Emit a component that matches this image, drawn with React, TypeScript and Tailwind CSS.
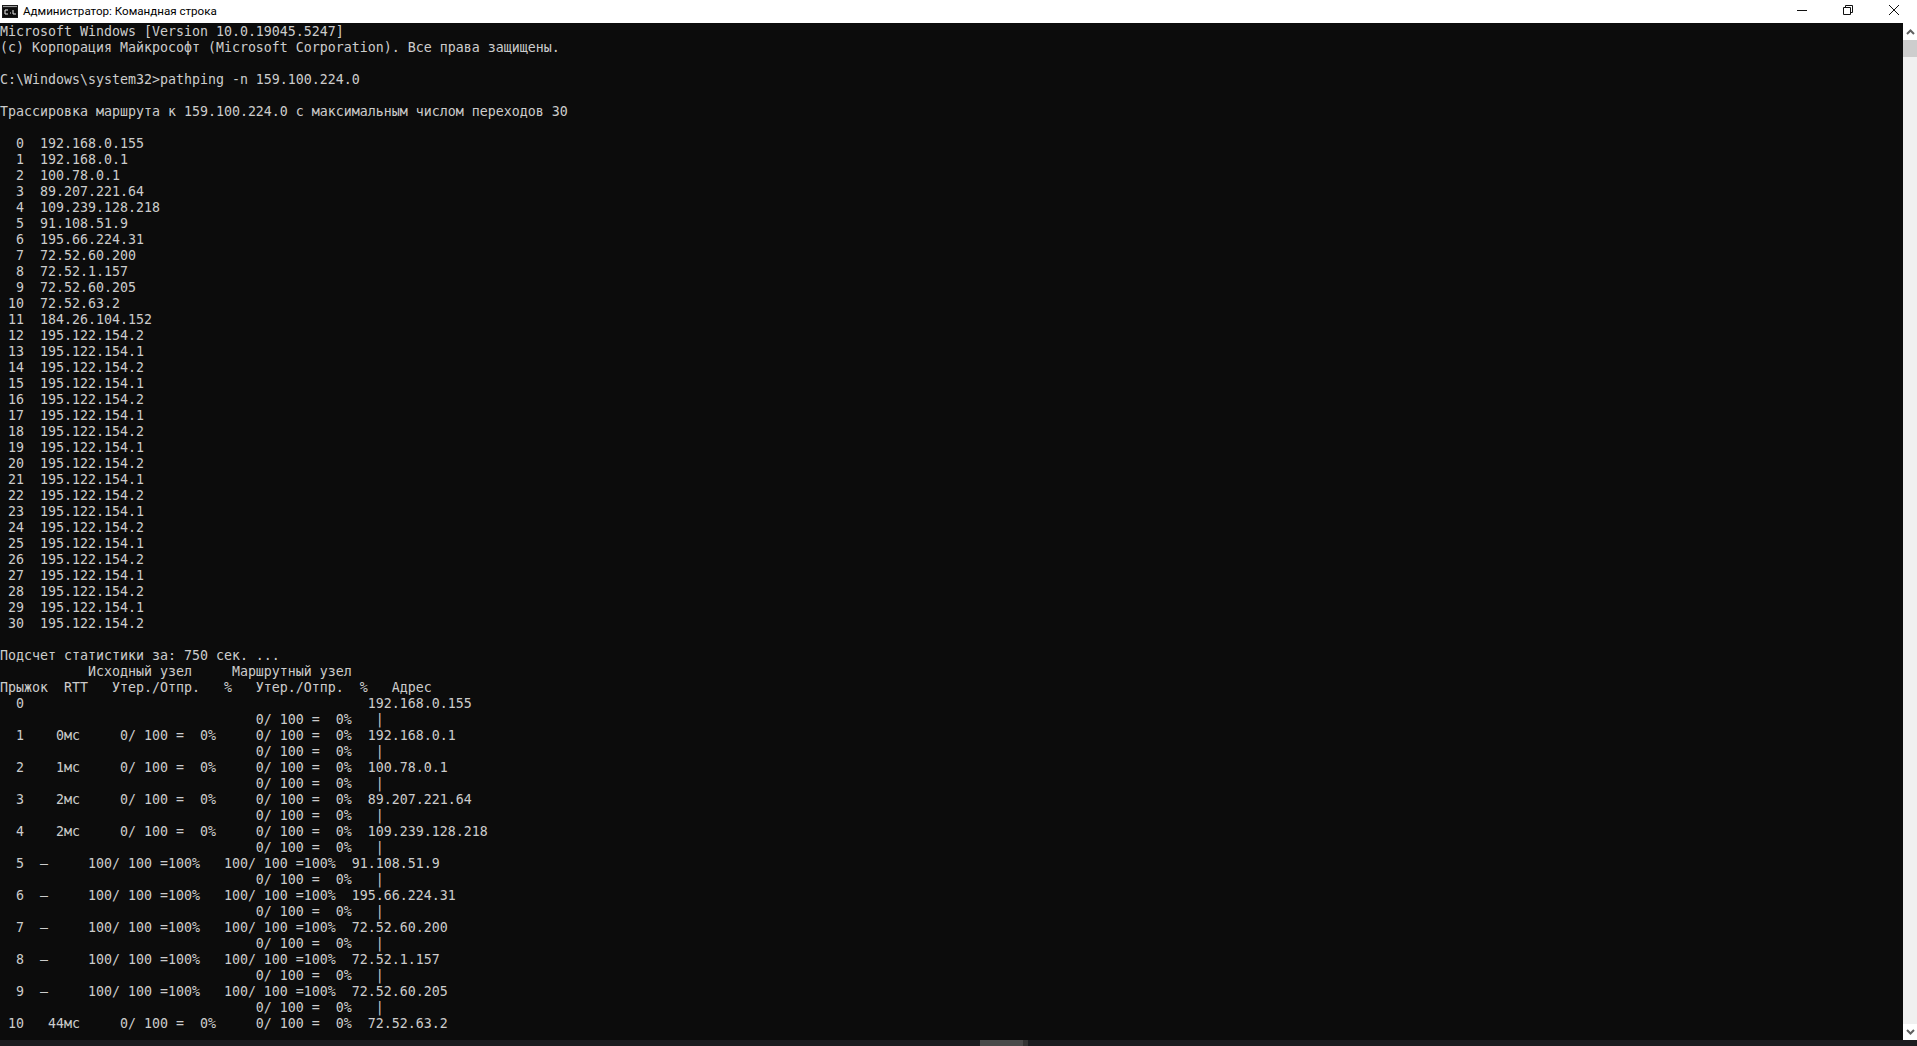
import React from 'react';

const hopAddresses = [
  '192.168.0.155', '192.168.0.1', '100.78.0.1', '89.207.221.64', '109.239.128.218',
  '91.108.51.9', '195.66.224.31', '72.52.60.200', '72.52.1.157', '72.52.60.205',
  '72.52.63.2', '184.26.104.152', '195.122.154.2', '195.122.154.1', '195.122.154.2',
  '195.122.154.1', '195.122.154.2', '195.122.154.1', '195.122.154.2', '195.122.154.1',
  '195.122.154.2', '195.122.154.1', '195.122.154.2', '195.122.154.1', '195.122.154.2',
  '195.122.154.1', '195.122.154.2', '195.122.154.1', '195.122.154.2', '195.122.154.1',
  '195.122.154.2',
];

const link = '                                0/ 100 =  0%   |';

const output = [
  'Microsoft Windows [Version 10.0.19045.5247]',
  '(c) Корпорация Майкрософт (Microsoft Corporation). Все права защищены.',
  '',
  'C:\\Windows\\system32>pathping -n 159.100.224.0',
  '',
  'Трассировка маршрута к 159.100.224.0 с максимальным числом переходов 30',
  '',
  ...hopAddresses.map((ip, i) => `${String(i).padStart(3, ' ')}  ${ip}`),
  '',
  'Подсчет статистики за: 750 сек. ...',
  '           Исходный узел     Маршрутный узел',
  'Прыжок  RTT   Утер./Отпр.   %   Утер./Отпр.  %   Адрес',
  '  0                                           192.168.0.155',
  link,
  '  1    0мс     0/ 100 =  0%     0/ 100 =  0%  192.168.0.1',
  link,
  '  2    1мс     0/ 100 =  0%     0/ 100 =  0%  100.78.0.1',
  link,
  '  3    2мс     0/ 100 =  0%     0/ 100 =  0%  89.207.221.64',
  link,
  '  4    2мс     0/ 100 =  0%     0/ 100 =  0%  109.239.128.218',
  link,
  '  5  —     100/ 100 =100%   100/ 100 =100%  91.108.51.9',
  link,
  '  6  —     100/ 100 =100%   100/ 100 =100%  195.66.224.31',
  link,
  '  7  —     100/ 100 =100%   100/ 100 =100%  72.52.60.200',
  link,
  '  8  —     100/ 100 =100%   100/ 100 =100%  72.52.1.157',
  link,
  '  9  —     100/ 100 =100%   100/ 100 =100%  72.52.60.205',
  link,
  ' 10   44мс     0/ 100 =  0%     0/ 100 =  0%  72.52.63.2',
];

const ConsoleIcon = () => (
  <svg width="16" height="13" viewBox="0 0 16 13" className="ml-[2px] mr-[5px] shrink-0">
    <rect x="0" y="0" width="16" height="13" fill="#1a1a1a" />
    <rect x="1" y="3" width="14" height="9" fill="#0c0c0c" />
    <rect x="1" y="1" width="14" height="1" fill="#9a9a9a" />
    <path d="M3 5h3M3 5v4M3 9h3M8 8h1M11 5v4h3" stroke="#e8e8e8" strokeWidth="1" fill="none" />
  </svg>
);

const WindowButtons = () => (
  <div className="flex h-full pb-[3px] pl-[1px]">
    <div className="flex w-[46px] items-center justify-center">
      <svg width="10" height="10" viewBox="0 0 10 10">
        <path d="M0 5.5h10" stroke="#111" strokeWidth="1" />
      </svg>
    </div>
    <div className="flex w-[46px] items-center justify-center">
      <svg width="10" height="10" viewBox="0 0 10 10">
        <path d="M0.5 2.5h7v7h-7zM2.5 2.5v-2h7v7h-2" stroke="#111" strokeWidth="1" fill="none" />
      </svg>
    </div>
    <div className="flex w-[46px] items-center justify-center">
      <svg width="10" height="10" viewBox="0 0 10 10">
        <path d="M0 0l10 10M10 0l-10 10" stroke="#111" strokeWidth="1" fill="none" />
      </svg>
    </div>
  </div>
);

export default function App() {
  return (
    <div className="flex h-screen w-full flex-col overflow-hidden bg-[#0c0c0c]">
      <div className="flex h-[23px] shrink-0 items-center justify-between bg-white">
        <div className="flex items-center font-['Roboto',sans-serif] text-[11.6px] text-black">
          <ConsoleIcon />
          <span>Администратор: Командная строка</span>
        </div>
        <WindowButtons />
      </div>
      <div className="flex min-h-0 flex-1">
        <pre className="min-w-0 flex-1 overflow-hidden pt-px font-['DejaVu_Sans_Mono',monospace] text-[13.29px] leading-[16px] text-[#cccccc]">
          {output.join('\n')}
        </pre>
        <div className="flex w-[14px] shrink-0 flex-col items-center bg-[#f0f0f0]">
          <div className="flex h-[17px] w-full items-center justify-center bg-white">
            <svg width="9" height="6" viewBox="0 0 9 6">
              <path d="M1 5l3.5-3.5L8 5" stroke="#606060" strokeWidth="2" fill="none" />
            </svg>
          </div>
          <div className="h-[17px] w-full bg-[#cdcdcd]" />
          <div className="flex-1" />
          <div className="flex h-[16px] w-full items-center justify-center bg-white">
            <svg width="9" height="6" viewBox="0 0 9 6">
              <path d="M1 1l3.5 3.5L8 1" stroke="#606060" strokeWidth="2" fill="none" />
            </svg>
          </div>
        </div>
      </div>
      <div className="flex h-[6px] shrink-0 bg-[#1b1c1f]">
        <div className="ml-[980px] h-full w-[43px] bg-[#4a4a4a]" />
        <div className="h-full w-[5px] bg-[#333333]" />
      </div>
    </div>
  );
}
